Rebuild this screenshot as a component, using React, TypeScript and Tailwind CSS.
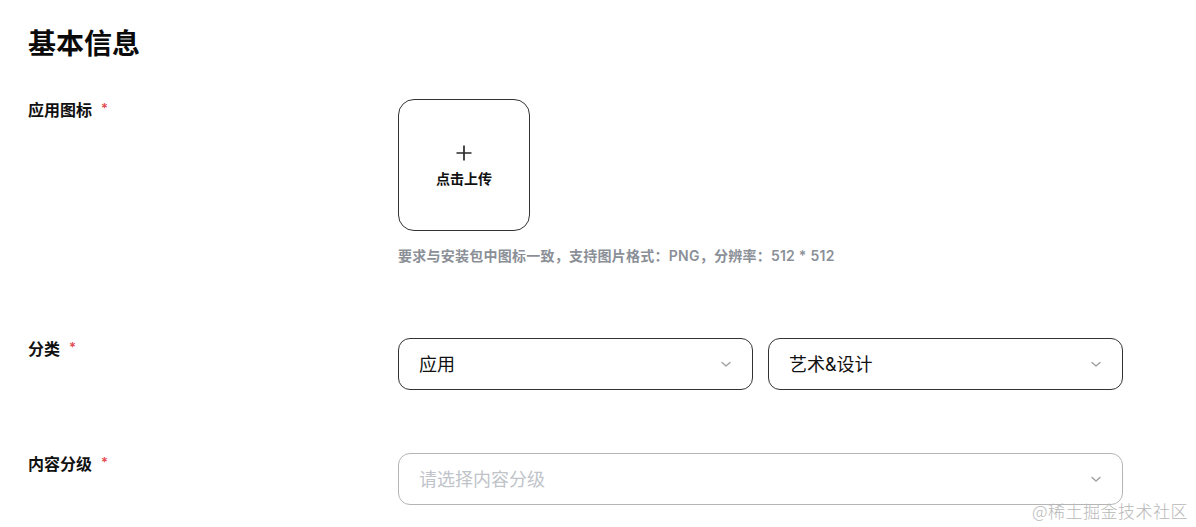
import React from "react";

const Chevron = ({ className = "" }: { className?: string }) => (
  <svg width="12" height="12" viewBox="0 0 12 12" className={className} fill="none">
    <path d="M2 4.5 6 8l4-3.5" stroke="currentColor" strokeWidth="1.4" strokeLinecap="round" strokeLinejoin="round" />
  </svg>
);

const Label = ({ text }: { text: string }) => (
  <div className="w-[370px] shrink-0 flex items-center h-[22px] text-[16px] font-semibold text-[#111]">
    <span>{text}</span>
    <span className="ml-[9px] text-[#e5484d] text-[13px] leading-none relative top-[-2px]">*</span>
  </div>
);

export default function App() {
  return (
    <div
      className="relative w-[1196px] h-[527px] bg-white overflow-hidden"
      style={{ fontFamily: 'Inter, "Noto Sans CJK SC", sans-serif' }}
    >
      <div className="pl-[28px] pt-[26px]">
        <h1 className="text-[28px] leading-[36px] font-bold text-[#0a0a0a]">基本信息</h1>

        <div className="flex mt-[37px]">
          <Label text="应用图标" />
          <div className="flex flex-col">
            <div className="w-[132px] h-[132px] border border-[#333] rounded-[16px] flex flex-col items-center justify-center">
              <svg width="18" height="18" viewBox="0 0 18 18" className="text-[#2a2a2a] mt-[2px]">
                <path d="M9 1.5v15M1.5 9h15" stroke="currentColor" strokeWidth="1.7" />
              </svg>
              <span className="mt-[8px] text-[14px] leading-[18px] font-semibold text-[#111]">点击上传</span>
            </div>
            <p className="mt-[15px] text-[14px] leading-[20px] font-semibold tracking-[0.25px] text-[#8b8f97]">
              要求与安装包中图标一致，支持图片格式：PNG，分辨率：512 * 512
            </p>
          </div>
        </div>

        <div className="flex mt-[72px]">
          <Label text="分类" />
          <div className="flex gap-[15px]">
            <div className="w-[355px] h-[52px] border border-[#333] rounded-[12px] flex items-center justify-between pl-[20px] pr-[20px]">
              <span className="text-[18px] text-[#111]">应用</span>
              <Chevron className="text-[#a0a0a0]" />
            </div>
            <div className="w-[355px] h-[52px] border border-[#333] rounded-[12px] flex items-center justify-between pl-[20px] pr-[20px]">
              <span className="text-[18px] text-[#111]">艺术&amp;设计</span>
              <Chevron className="text-[#a0a0a0]" />
            </div>
          </div>
        </div>

        <div className="flex mt-[63px]">
          <Label text="内容分级" />
          <div className="w-[725px] h-[52px] border border-[#b5b5b5] rounded-[12px] flex items-center justify-between pl-[20px] pr-[20px]">
            <span className="text-[18px] text-[#c0c3c9]">请选择内容分级</span>
            <Chevron className="text-[#a0a0a0]" />
          </div>
        </div>
      </div>

      <div
        className="absolute right-[8px] bottom-[4px] text-[17px] text-[#b8b8b8] tracking-[0.5px]"
        style={{ fontFamily: '"Noto Sans CJK SC", sans-serif', fontWeight: 300 }}
      >
        @稀土掘金技术社区
      </div>
    </div>
  );
}
